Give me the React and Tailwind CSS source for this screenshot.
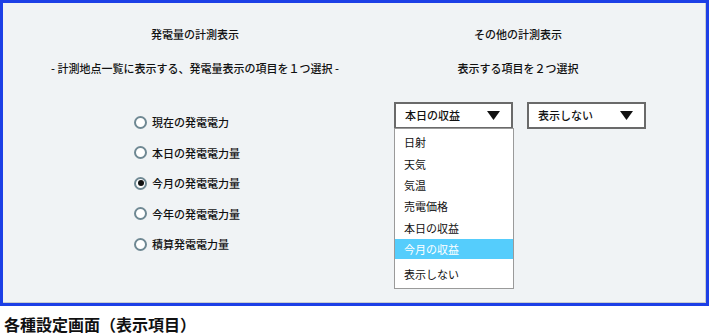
import { useState } from 'react';

const fontJP = { fontFamily: '"Noto Sans CJK JP", "Noto Sans", sans-serif' };

const radioItems = ['現在の発電電力', '本日の発電電力量', '今月の発電電力量', '今年の発電電力量', '積算発電電力量'];
const options = ['日射', '天気', '気温', '売電価格', '本日の収益', '今月の収益', '表示しない'];

function Radio({ label, checked, onClick }) {
  return (
    <div onClick={onClick} className="flex items-center h-[30.5px] cursor-pointer">
      <span className="w-[13px] h-[13px] rounded-full border-2 border-[#6f8893] bg-white flex items-center justify-center">
        {checked && <span className="w-[6px] h-[6px] rounded-full bg-[#111]" />}
      </span>
      <span className="ml-[5px] text-[11px] font-medium text-[#111]">{label}</span>
    </div>
  );
}

function Select({ value }) {
  return (
    <div className="w-[119px] h-[27px] border-2 border-[#6a6a6a] bg-white flex items-center justify-between pl-[9px] pr-[11px]">
      <span className="text-[11px] font-medium text-[#111]">{value}</span>
      <svg width="13" height="9" viewBox="0 0 13 9"><path d="M0 0 L13 0 L6.5 9 Z" fill="#111" /></svg>
    </div>
  );
}

export default function App() {
  const [selected, setSelected] = useState(2);

  return (
    <div className="w-[709px] h-[335px] bg-white" style={fontJP}>
      <div className="w-[709px] h-[306px] border-[3px] border-[#1c3fe6] bg-[#f0f3f5]">
        <div className="w-full h-full border-r border-b border-[#c8ccd0] flex">
          {/* 左：発電量 */}
          <div className="w-[384px] flex flex-col">
            <div className="pt-[23px] text-center text-[11px] font-medium text-[#111]">発電量の計測表示</div>
            <div className="mt-[17px] text-center text-[11px] font-medium text-[#111]">- 計測地点一覧に表示する、発電量表示の項目を１つ選択 -</div>
            <div className="mt-[31px] pl-[131px] flex flex-col">
              {radioItems.map((r, i) => (
                <Radio key={r} label={r} checked={selected === i} onClick={() => setSelected(i)} />
              ))}
            </div>
          </div>

          {/* 右：その他 */}
          <div className="w-[262px] flex flex-col">
            <div className="pt-[23px] text-center text-[11px] font-medium text-[#111]">その他の計測表示</div>
            <div className="mt-[17px] text-center text-[11px] font-medium text-[#111]">表示する項目を２つ選択</div>
            <div className="mt-[26px] pl-[7px] flex gap-[14px]">
              <div className="relative">
                <Select value="本日の収益" />
                <div className="absolute left-0 top-[26px] w-[120px] h-[161px] bg-white border border-[#9a9a9a] pt-[3px] z-10">
                  {options.map((o) => {
                    const hl = o === '今月の収益';
                    return (
                      <div
                        key={o}
                        className={
                          hl
                            ? 'h-[20px] mt-[1px] mb-[4px] flex items-center pl-[9px] bg-[#55cdfc] text-white text-[11px]'
                            : 'h-[21.3px] flex items-center pl-[9px] text-[#111] text-[11px]'
                        }
                      >
                        {o}
                      </div>
                    );
                  })}
                </div>
              </div>
              <Select value="表示しない" />
            </div>
          </div>
        </div>
      </div>
      <div className="pl-[4px] pt-[8px] text-[16px] font-bold text-[#111] leading-[20px]">各種設定画面（表示項目）</div>
    </div>
  );
}
